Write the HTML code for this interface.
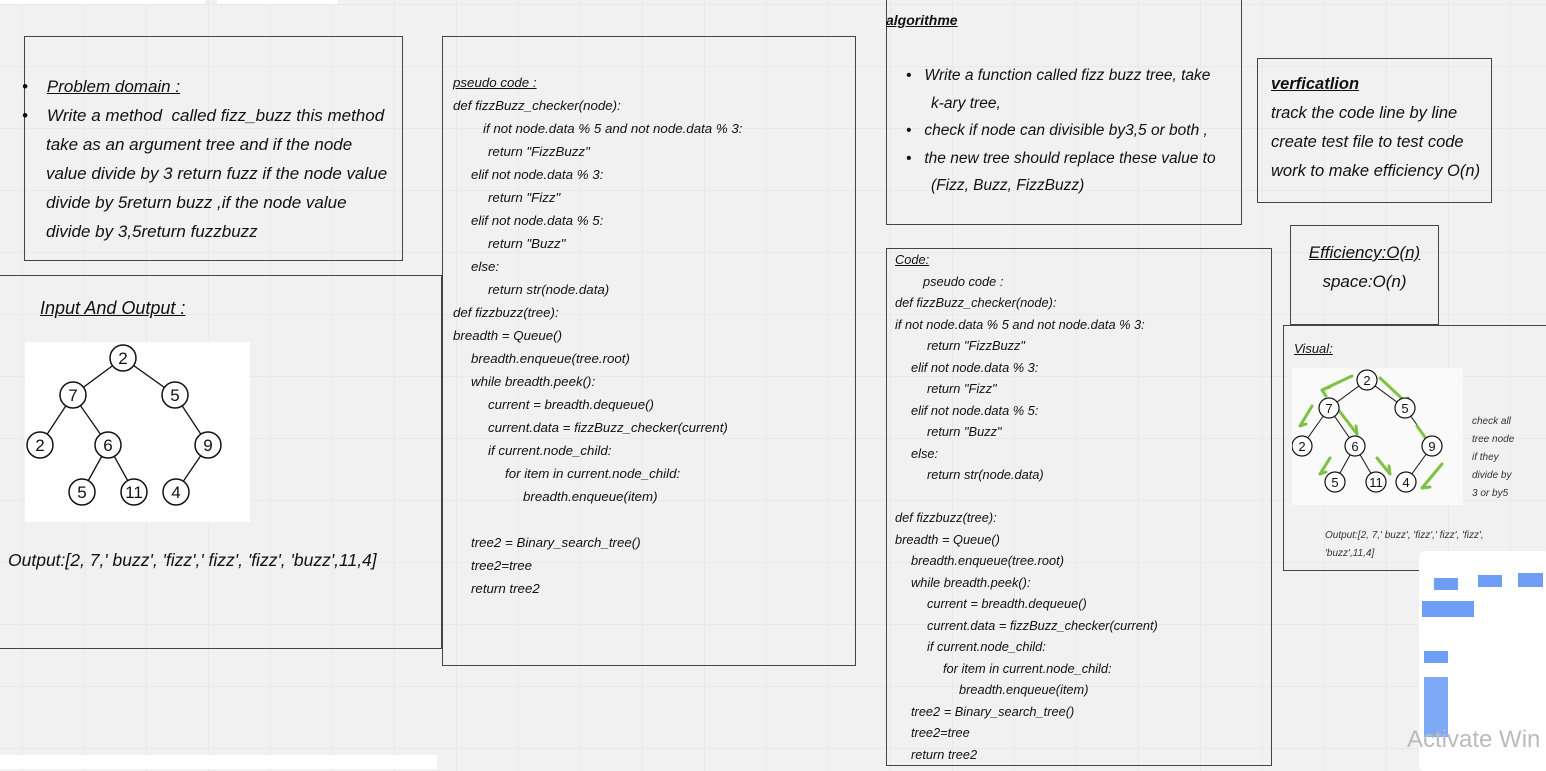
<!DOCTYPE html>
<html><head><meta charset="utf-8"><style>
body{margin:0;width:1546px;height:769px;overflow:hidden;background:#f1f1f1;position:relative;font-family:"Liberation Sans",sans-serif;font-style:italic;color:#111;
background-image:linear-gradient(#e9e9e9 1px,transparent 1px),linear-gradient(90deg,#e9e9e9 1px,transparent 1px);background-size:62px 62px;background-position:22px 4px}
.b{position:absolute;border:1.5px solid #444;box-sizing:border-box}
.a{position:absolute;white-space:nowrap}
u{text-decoration:underline}
.pc div{height:23px}
.cc div{height:21.5px}
svg text{font-style:normal}
</style></head><body>
<div class="a" style="left:0;top:0;width:205px;height:4px;background:#fff"></div>
<div class="a" style="left:217px;top:0;width:120px;height:4px;background:#fff"></div>
<div class="a" style="left:0;top:755px;width:437px;height:14px;background:#fff"></div>

<div class="b" style="left:24px;top:36px;width:379px;height:225px"></div>
<div class="a" style="left:22px;top:72px;font-size:17px;line-height:29px">
<div>•&nbsp;&nbsp;&nbsp;&nbsp;<u>Problem domain :</u></div>
<div>•&nbsp;&nbsp;&nbsp;&nbsp;Write a method&nbsp; called fizz_buzz this method</div>
<div style="padding-left:24px">take as an argument tree and if the node<br>value divide by 3 return fuzz if the node value<br>divide by 5return buzz ,if the node value<br>divide by 3,5return fuzzbuzz</div></div>

<div class="b" style="left:-2px;top:275px;width:444px;height:374px"></div>
<div class="a" style="left:40px;top:298px;font-size:18px"><u>Input And Output :</u></div>
<svg class="a" style="left:25px;top:342px" width="225" height="180">
<rect width="225" height="180" fill="#fff"/>
<g stroke="#111" stroke-width="1.3" fill="none">
<line x1="98" y1="16" x2="48" y2="53"/><line x1="98" y1="16" x2="150" y2="53"/>
<line x1="48" y1="53" x2="15" y2="103"/><line x1="48" y1="53" x2="83" y2="103"/>
<line x1="150" y1="53" x2="183" y2="103"/><line x1="83" y1="103" x2="57" y2="150"/>
<line x1="83" y1="103" x2="109" y2="150"/><line x1="183" y1="103" x2="151" y2="150"/>
</g>
<g stroke="#111" stroke-width="1.5" fill="#fff">
<circle cx="98" cy="16" r="13"/><circle cx="48" cy="53" r="13"/><circle cx="150" cy="53" r="13"/>
<circle cx="15" cy="103" r="13"/><circle cx="83" cy="103" r="13"/><circle cx="183" cy="103" r="13"/>
<circle cx="57" cy="150" r="13"/><circle cx="109" cy="150" r="13"/><circle cx="151" cy="150" r="13"/></g>
<g font-family="Liberation Sans" font-size="17" text-anchor="middle" fill="#111">
<text x="98" y="22">2</text><text x="48" y="59">7</text><text x="150" y="59">5</text><text x="15" y="109">2</text><text x="83" y="109">6</text><text x="183" y="109">9</text><text x="57" y="156">5</text><text x="109" y="156">11</text><text x="151" y="156">4</text></g></svg>
<div class="a" style="left:8px;top:550px;font-size:17.5px">Output:[2, 7,' buzz', 'fizz',' fizz', 'fizz', 'buzz',11,4]</div>

<div class="b" style="left:442px;top:36px;width:414px;height:630px"></div>
<div class="a pc" style="left:453px;top:71px;font-size:13.3px;line-height:23px">
<div><u>pseudo code :</u></div>
<div>def fizzBuzz_checker(node):</div>
<div style="padding-left:30px">if not node.data % 5 and not node.data % 3:</div>
<div style="padding-left:35px">return "FizzBuzz"</div>
<div style="padding-left:18px">elif not node.data % 3:</div>
<div style="padding-left:35px">return "Fizz"</div>
<div style="padding-left:18px">elif not node.data % 5:</div>
<div style="padding-left:35px">return "Buzz"</div>
<div style="padding-left:18px">else:</div>
<div style="padding-left:35px">return str(node.data)</div>
<div>def fizzbuzz(tree):</div>
<div>breadth = Queue()</div>
<div style="padding-left:18px">breadth.enqueue(tree.root)</div>
<div style="padding-left:18px">while breadth.peek():</div>
<div style="padding-left:35px">current = breadth.dequeue()</div>
<div style="padding-left:35px">current.data = fizzBuzz_checker(current)</div>
<div style="padding-left:35px">if current.node_child:</div>
<div style="padding-left:52px">for item in current.node_child:</div>
<div style="padding-left:70px">breadth.enqueue(item)</div>
<div></div>
<div style="padding-left:18px">tree2 = Binary_search_tree()</div>
<div style="padding-left:18px">tree2=tree</div>
<div style="padding-left:18px">return tree2</div>
</div>

<div class="b" style="left:886px;top:-5px;width:356px;height:230px"></div>
<div class="a" style="left:886px;top:12px;font-size:14px;font-weight:bold"><u>algorithme</u></div>
<div class="a" style="left:906px;top:62px;font-size:15.5px;line-height:27.5px">
<div>•&nbsp;&nbsp;&nbsp;Write a function called fizz buzz tree, take</div>
<div style="padding-left:25px">k-ary tree,</div>
<div>•&nbsp;&nbsp;&nbsp;check if node can divisible by3,5 or both ,</div>
<div>•&nbsp;&nbsp;&nbsp;the new tree should replace these value to</div>
<div style="padding-left:25px">(Fizz, Buzz, FizzBuzz)</div></div>

<div class="b" style="left:1257px;top:58px;width:235px;height:145px"></div>
<div class="a" style="left:1271px;top:70px;font-size:16.5px;line-height:29px;font-weight:bold">
<div><u>verficatlion</u></div><div style="font-weight:normal">track the code line by line</div><div style="font-weight:normal">create test file to test code</div><div style="font-weight:normal">work to make efficiency O(n)</div></div>

<div class="b" style="left:1290px;top:225px;width:149px;height:100px"></div>
<div class="a" style="left:1290px;top:238px;width:149px;text-align:center;font-size:17px;line-height:29px"><div><u>Efficiency:O(n)</u></div><div>space:O(n)</div></div>

<div class="b" style="left:886px;top:248px;width:386px;height:518px"></div>
<div class="a cc" style="left:895px;top:249px;font-size:12.8px;line-height:21.5px">
<div><u>Code:</u></div>
<div style="padding-left:28px">pseudo code :</div>
<div>def fizzBuzz_checker(node):</div>
<div>if not node.data % 5 and not node.data % 3:</div>
<div style="padding-left:32px">return "FizzBuzz"</div>
<div style="padding-left:16px">elif not node.data % 3:</div>
<div style="padding-left:32px">return "Fizz"</div>
<div style="padding-left:16px">elif not node.data % 5:</div>
<div style="padding-left:32px">return "Buzz"</div>
<div style="padding-left:16px">else:</div>
<div style="padding-left:32px">return str(node.data)</div>
<div></div>
<div>def fizzbuzz(tree):</div>
<div>breadth = Queue()</div>
<div style="padding-left:16px">breadth.enqueue(tree.root)</div>
<div style="padding-left:16px">while breadth.peek():</div>
<div style="padding-left:32px">current = breadth.dequeue()</div>
<div style="padding-left:32px">current.data = fizzBuzz_checker(current)</div>
<div style="padding-left:32px">if current.node_child:</div>
<div style="padding-left:48px">for item in current.node_child:</div>
<div style="padding-left:64px">breadth.enqueue(item)</div>
<div style="padding-left:16px">tree2 = Binary_search_tree()</div>
<div style="padding-left:16px">tree2=tree</div>
<div style="padding-left:16px">return tree2</div>
</div>

<div class="b" style="left:1283px;top:325px;width:270px;height:246px"></div>
<div class="a" style="left:1294px;top:341px;font-size:13px"><u>Visual:</u></div>
<svg class="a" style="left:1292px;top:368px" width="171" height="137">
<rect width="171" height="137" fill="#fafafa"/>
<g stroke="#111" stroke-width="1" fill="none">
<line x1="75" y1="12" x2="37" y2="40"/><line x1="75" y1="12" x2="113" y2="40"/>
<line x1="37" y1="40" x2="10" y2="78"/><line x1="37" y1="40" x2="63" y2="78"/>
<line x1="113" y1="40" x2="140" y2="78"/><line x1="63" y1="78" x2="43" y2="114"/>
<line x1="63" y1="78" x2="84" y2="114"/><line x1="140" y1="78" x2="114" y2="114"/></g>
<g stroke="#7dc242" stroke-width="3" fill="none" stroke-linecap="round">
<path d="M60 8 L30 22 M30 22 L38 19 M30 22 L34 28"/><path d="M88 10 L118 38 M118 38 L110 36 M118 38 L116 30"/><path d="M20 38 L8 58 M8 58 L14 56"/><path d="M45 40 L65 66 M65 66 L64 58"/><path d="M125 58 L142 82 M142 82 L140 74"/><path d="M38 90 L28 106 M28 106 L34 104"/><path d="M85 90 L98 106 M98 106 L97 98"/><path d="M150 96 L130 120 M130 120 L138 119"/></g>
<g stroke="#111" stroke-width="1.2" fill="#fff">
<circle cx="75" cy="12" r="10"/><circle cx="37" cy="40" r="10"/><circle cx="113" cy="40" r="10"/>
<circle cx="10" cy="78" r="10"/><circle cx="63" cy="78" r="10"/><circle cx="140" cy="78" r="10"/>
<circle cx="43" cy="114" r="10"/><circle cx="84" cy="114" r="10"/><circle cx="114" cy="114" r="10"/></g>
<g font-family="Liberation Sans" font-size="13" text-anchor="middle" fill="#111">
<text x="75" y="17">2</text><text x="37" y="45">7</text><text x="113" y="45">5</text><text x="10" y="83">2</text><text x="63" y="83">6</text><text x="140" y="83">9</text><text x="43" y="119">5</text><text x="84" y="119">11</text><text x="114" y="119">4</text></g></svg>
<div class="a" style="left:1472px;top:413px;font-size:10px;line-height:18px;color:#333">check all<br>tree node<br>if they<br>divide by<br>3 or by5</div>
<div class="a" style="left:1325px;top:527px;font-size:10px;line-height:18px;color:#333">Output:[2, 7,' buzz', 'fizz',' fizz', 'fizz',<br>'buzz',11,4]</div>

<div class="a" style="left:1419px;top:551px;width:130px;height:220px;background:#fff;border-radius:6px"></div>
<div class="a" style="left:1434px;top:578px;width:24px;height:12px;background:#6e9ef5"></div>
<div class="a" style="left:1478px;top:575px;width:24px;height:12px;background:#6e9ef5"></div>
<div class="a" style="left:1518px;top:573px;width:25px;height:14px;background:#6e9ef5"></div>
<div class="a" style="left:1422px;top:601px;width:52px;height:16px;background:#6e9ef5"></div>
<div class="a" style="left:1424px;top:651px;width:24px;height:12px;background:#6e9ef5"></div>
<div class="a" style="left:1424px;top:677px;width:24px;height:60px;background:#7ea9f5"></div>
<div class="a" style="left:1407px;top:726px;font-size:24px;font-style:normal;color:#bbb">Activate Win</div>
</body></html>
